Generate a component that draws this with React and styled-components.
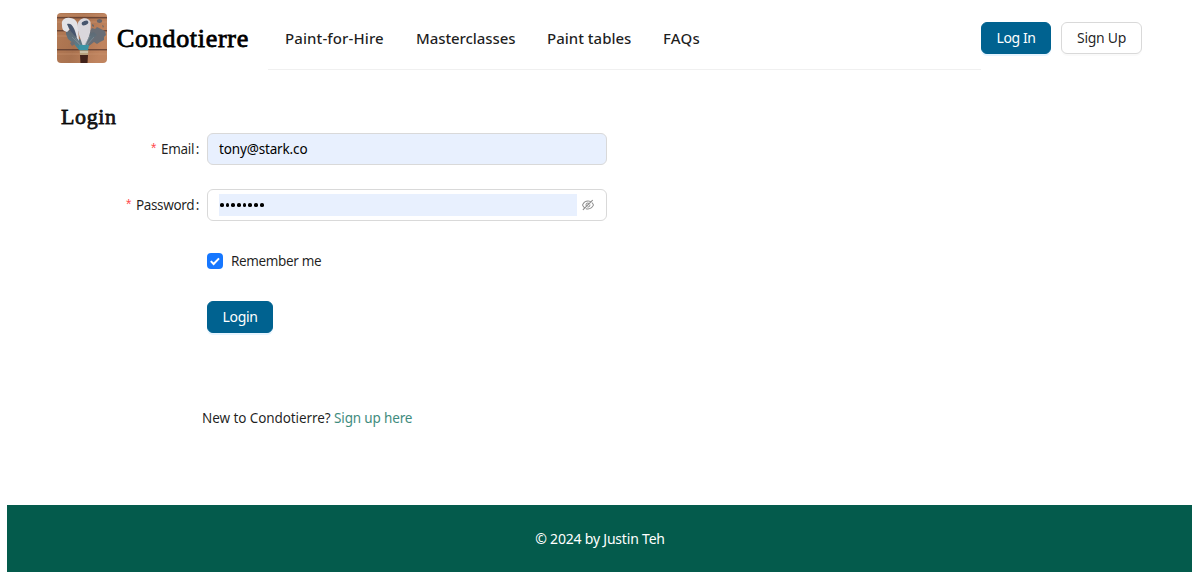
import React from 'react';
import styled, { createGlobalStyle } from 'styled-components';
import { AiOutlineEyeInvisible } from 'react-icons/ai';

const Global = createGlobalStyle`
  * { box-sizing: border-box; }
  body {
    margin: 0;
    background: #fff;
    color: rgba(0, 0, 0, 0.88);
    font: 14px/22px "Noto Sans", "Open Sans", sans-serif;
  }
`;

const Page = styled.div`
  display: flex;
  flex-direction: column;
  height: 580px;
  padding: 7px 5px 8px 7px;
`;
const Header = styled.header`
  display: flex;
  height: 63px;
  padding: 0 50px;
  flex: none;
`;
const Brand = styled.a`
  display: flex;
  align-items: flex-start;
  gap: 10px;
  width: 211px;
  padding-top: 6px;
  color: #000;
`;
const BrandName = styled.span`
  margin-top: 11px;
  font: 26px/30px "Liberation Serif", serif;
  letter-spacing: 0.7px;
  -webkit-text-stroke: 0.8px currentColor;
`;
const Menu = styled.nav`
  display: flex;
  flex: 1;
  gap: 32px;
  padding: 0 17px;
  border-bottom: 1px solid #f0f0f0;
`;
const MenuItem = styled.a`
  width: ${(p) => p.$width}px;
  white-space: nowrap;
  font-size: 15px;
  font-weight: 500;
  line-height: 62px;
  letter-spacing: ${(p) => p.$spacing || 0}px;
`;
const Actions = styled.div`
  display: flex;
  gap: 10px;
  padding-top: 15px;
`;
const Button = styled.button`
  height: 32px;
  width: ${(p) => p.$width}px;
  padding: 0;
  white-space: nowrap;
  border-radius: 6px;
  border: 1px solid ${(p) => (p.$primary ? '#006290' : '#d9d9d9')};
  background: ${(p) => (p.$primary ? '#006290' : '#fff')};
  color: ${(p) => (p.$primary ? '#fff' : 'rgba(0, 0, 0, 0.88)')};
  box-shadow: 0 2px 0 ${(p) => (p.$primary ? 'rgba(5, 145, 255, 0.1)' : 'rgba(0, 0, 0, 0.02)')};
  font: inherit;
  letter-spacing: ${(p) => p.$spacing || 0}px;
`;
const Main = styled.main`
  flex: 1;
  padding: 34px 54px 0;
`;
const Title = styled.h2`
  margin: 0;
  height: 29px;
  font: 22px/25px "Liberation Serif", serif;
  letter-spacing: 0.6px;
  -webkit-text-stroke: 0.8px currentColor;
`;
const Field = styled.div`
  display: flex;
  align-items: center;
  height: 32px;
  margin-bottom: 24px;
`;
const Label = styled.label`
  width: 146px;
  padding-right: 8px;
  text-align: right;
  white-space: nowrap;
  font-size: 13.5px;
  letter-spacing: ${(p) => p.$spacing || 0}px;
  &::before {
    content: '*';
    margin-right: 3.5px;
    color: #ff4d4f;
    font: 14px "Liberation Mono", monospace;
  }
  &::after {
    content: ':';
    margin-left: 1.5px;
  }
`;
const InputBox = styled.div`
  display: flex;
  align-items: center;
  width: 400px;
  height: 32px;
  padding: 0 11px;
  border: 1px solid #d9d9d9;
  border-radius: 6px;
  background: ${(p) => (p.$filled ? '#e8f0fe' : '#fff')};
  color: #000;
`;
const Input = styled.input`
  flex: 1;
  min-width: 0;
  height: 22px;
  padding: 0;
  border: 0;
  outline: 0;
  background: #e8f0fe;
  color: #000;
  font: inherit;
  font-size: 13.5px;
  letter-spacing: ${(p) => p.$spacing || 0}px;
`;
const Dots = styled.div`
  display: flex;
  align-items: center;
  gap: 2px;
  flex: 1;
  height: 22px;
  padding-left: 1px;
  background: #e8f0fe;
`;
const Dot = styled.i`
  width: 3.7px;
  height: 3.7px;
  border-radius: 50%;
  background: #000;
`;
const Eye = styled(AiOutlineEyeInvisible)`
  margin-left: 4px;
  color: rgba(0, 0, 0, 0.45);
`;
const Offset = styled.div`
  display: flex;
  align-items: center;
  height: 32px;
  margin: 0 0 24px 146px;
`;
const Check = styled.span`
  display: flex;
  width: 16px;
  height: 16px;
  margin-right: 8px;
  border-radius: 4px;
  background: #1677ff;
`;
const Copy = styled.span`
  white-space: pre;
  font-size: ${(p) => p.$size || 13.5}px;
  letter-spacing: ${(p) => p.$spacing || 0}px;
`;
const Signup = styled.p`
  margin: 74px 0 0 141px;
`;
const Link = styled.a`
  color: #3f8c7e;
  font-size: 13.5px;
  letter-spacing: ${(p) => p.$spacing || 0}px;
`;
const Footer = styled.footer`
  display: flex;
  align-items: center;
  justify-content: center;
  flex: none;
  height: 67px;
  padding: 1px 0 0 1px;
  background: #045b4c;
  color: #fff;
`;

const Logo = () => (
  <svg width="50" height="50" viewBox="0 0 50 50">
    <defs>
      <clipPath id="tile"><rect width="50" height="50" rx="4" /></clipPath>
      <linearGradient id="wood" x1="0" x2="1" y1="0" y2="0.3">
        <stop offset="0" stopColor="#b57c57" />
        <stop offset="0.5" stopColor="#a9724f" />
        <stop offset="1" stopColor="#c0845f" />
      </linearGradient>
      <linearGradient id="bristle" x1="0" x2="0" y1="0" y2="1">
        <stop offset="0" stopColor="#5e6873" />
        <stop offset="0.65" stopColor="#607681" />
        <stop offset="1" stopColor="#3192a5" />
      </linearGradient>
    </defs>
    <g clipPath="url(#tile)">
      <rect width="50" height="50" fill="url(#wood)" />
      <path d="M0 2H50M0 9H50M0 23H50M0 41H50" stroke="#c99370" opacity=".6" />
      <path d="M0 4.8H50M0 17.8H50M0 36.8H50" stroke="#4d3028" />
      <path d="M33 18l2-3 3 1 2-2 4 2 4 2 1 4-2 2 0 3-4 2-3 2-3-2-5 4-4-1 2-7z" fill="#686d75" />
      <path d="M9 18l5-1 6 8 5 2 6-6 6-2 3 3-6 5-5 7-1 3h-6l-5-6-6-5-2-5z" fill="url(#bristle)" />
      <path d="M5 12c-1-5 3-8 8-7 5 0 8 4 8 9l1 14c-4-5-5-10-9-14 0 3-2 4-3 5-4-1-5-3-5-7z" fill="#e2e2e6" />
      <path d="M20.5 13c0-9 11-10 13-4 1 8-1 14-5 23h-3c-2-7-5-13-5-19z" fill="#d9d7dc" />
      <path d="M10 11c5-2 8 5 10 14-4-4-8-8-10-14" fill="#46556d" />
      <ellipse cx="28" cy="10" rx="3.4" ry="2.1" fill="#46556d" transform="rotate(-20 28 10)" />
      <path d="M18 25l6 8M33 23l-5 9M37 24l-8 9M15 24l8 8" stroke="#82919a" opacity=".7" />
      <path d="M13 30l3-2 2 3-3 2z" fill="#6b6d73" />
      <ellipse cx="42.5" cy="8" rx="2.7" ry="2" fill="#67666b" />
      <path d="M35 11l2 1 0 2-2-1zM45 12l2 1-1 2z" fill="#6d6969" />
      <path d="M22 32h10l-1 5.5h-8z" fill="#3a94a5" />
      <path d="M22.5 37.5h9l-.5 4.5h-8z" fill="#b7a17e" />
      <path d="M23 39h8" stroke="#e0ddcd" />
      <path d="M23 42h8l-.5 8h-7z" fill="#42221a" />
    </g>
  </svg>
);

export default function App() {
  return (
    <>
      <Global />
      <Page>
        <Header>
          <Brand><Logo /><BrandName>Condotierre</BrandName></Brand>
          <Menu>
            <MenuItem $width={99} $spacing={0.1}>Paint-for-Hire</MenuItem>
            <MenuItem $width={99} $spacing={-0.08}>Masterclasses</MenuItem>
            <MenuItem $width={84}>Paint tables</MenuItem>
            <MenuItem $width={40} $spacing={0.2}>FAQs</MenuItem>
          </Menu>
          <Actions>
            <Button $primary $width={70} $spacing={-0.4}>Log In</Button>
            <Button $width={81} $spacing={-0.3}>Sign Up</Button>
          </Actions>
        </Header>
        <Main>
          <Title>Login</Title>
          <Field>
            <Label $spacing={-0.3}>Email</Label>
            <InputBox $filled><Input readOnly value="tony@stark.co" $spacing={-0.15} /></InputBox>
          </Field>
          <Field>
            <Label $spacing={-0.35}>Password</Label>
            <InputBox>
              <Dots>{Array.from({ length: 8 }, (_, i) => <Dot key={i} />)}</Dots>
              <Eye size={14} />
            </InputBox>
          </Field>
          <Offset>
            <Check>
              <svg width="16" height="16" viewBox="0 0 16 16" fill="none" stroke="#fff" strokeWidth="2">
                <path d="M3.8 8.1l2.8 2.9 5.4-5.6" />
              </svg>
            </Check>
            <Copy $spacing={-0.35}>Remember me</Copy>
          </Offset>
          <Offset><Button $primary $width={66} $spacing={-0.35}>Login</Button></Offset>
          <Signup><Copy $spacing={-0.08}>New to Condotierre? </Copy><Link $spacing={-0.15}>Sign up here</Link></Signup>
        </Main>
        <Footer><Copy $size={14} $spacing={-0.2}>© 2024 by Justin Teh</Copy></Footer>
      </Page>
    </>
  );
}
